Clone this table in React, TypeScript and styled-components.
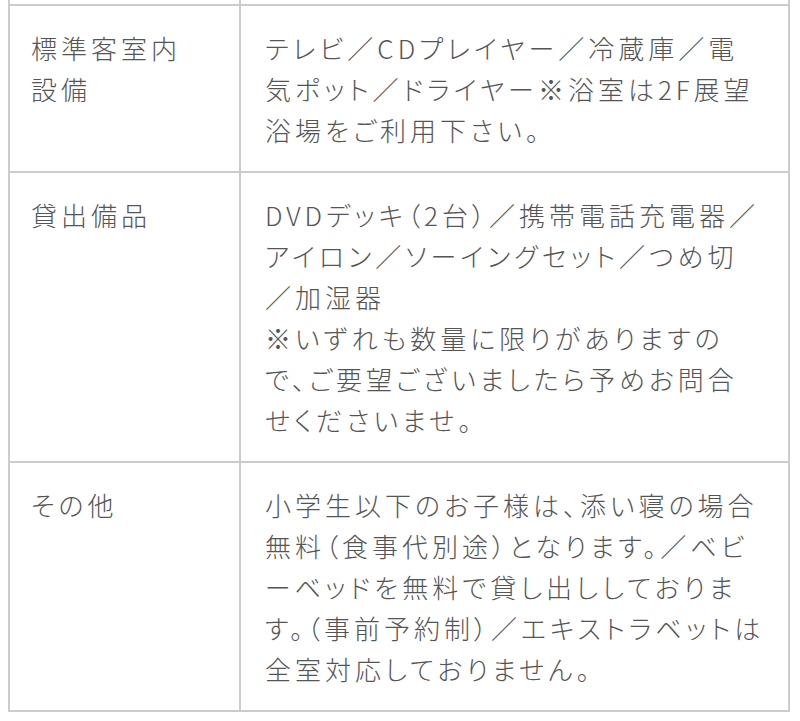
import React from 'react'
import styled, { createGlobalStyle } from 'styled-components'

const GlobalStyle = createGlobalStyle`
    body {
        margin: 0;
        background: #fff;
    }
`

const rows = [
    {
        label: '標準客室内設備',
        value: ['テレビ／CDプレイヤー／冷蔵庫／電気ポット／ドライヤー※浴室は2F展望浴場をご利用下さい。'],
    },
    {
        label: '貸出備品',
        value: [
            'DVDデッキ（2台）／携帯電話充電器／アイロン／ソーイングセット／つめ切／加湿器',
            '※いずれも数量に限りがありますので、ご要望ございましたら予めお問合せくださいませ。',
        ],
    },
    {
        label: 'その他',
        value: ['小学生以下のお子様は、添い寝の場合無料（食事代別途）となります。／ベビーベッドを無料で貸し出ししております。（事前予約制）／エキストラベットは全室対応しておりません。'],
    },
]

const App = () => {
    return (
        <>
            <GlobalStyle />
            <Page lang="ja">
                <Frame>
                    {/* 前の行の続き（上端だけ見えている） */}
                    <Row $stub>
                        <Label $stub />
                        <Value $stub />
                    </Row>
                    {rows.map((row) => (
                        <Row key={row.label}>
                            <Label>{row.label}</Label>
                            <Value>
                                {row.value.map((text, i) => (
                                    <Para key={i}>{text}</Para>
                                ))}
                            </Value>
                        </Row>
                    ))}
                </Frame>
            </Page>
        </>
    )
}

export default App

const Page = styled.div`
    padding: 0 10px 7px 8px;
    font-family: "Noto Sans CJK JP", "Noto Sans", sans-serif;
    font-size: 26px;
    font-weight: 300;
    line-height: 41px;
    letter-spacing: 4px;
    font-feature-settings: "palt";
    line-break: normal;
    color: #555555;
`

const Frame = styled.div`
    width: 782px;
    box-sizing: border-box;
    border-left: 2px solid #cccccc;
    border-right: 2px solid #cccccc;
    border-bottom: 2px solid #cccccc;
`

const Row = styled.div<{ $stub?: boolean }>`
    display: flex;
    border-top: ${(p) => (p.$stub ? 'none' : '2px solid #cccccc')};
    height: ${(p) => (p.$stub ? '4px' : 'auto')};
`

const Label = styled.div<{ $stub?: boolean }>`
    width: 231px;
    flex-shrink: 0;
    box-sizing: border-box;
    border-right: 2px solid #cccccc;
    padding: ${(p) => (p.$stub ? '0' : '21px 48px 21px 21px')};
`

const Value = styled.div<{ $stub?: boolean }>`
    flex: 1;
    padding: ${(p) => (p.$stub ? '0' : '21px 23.5px 21px 24px')};
`

const Para = styled.p`
    margin: 0;
`
